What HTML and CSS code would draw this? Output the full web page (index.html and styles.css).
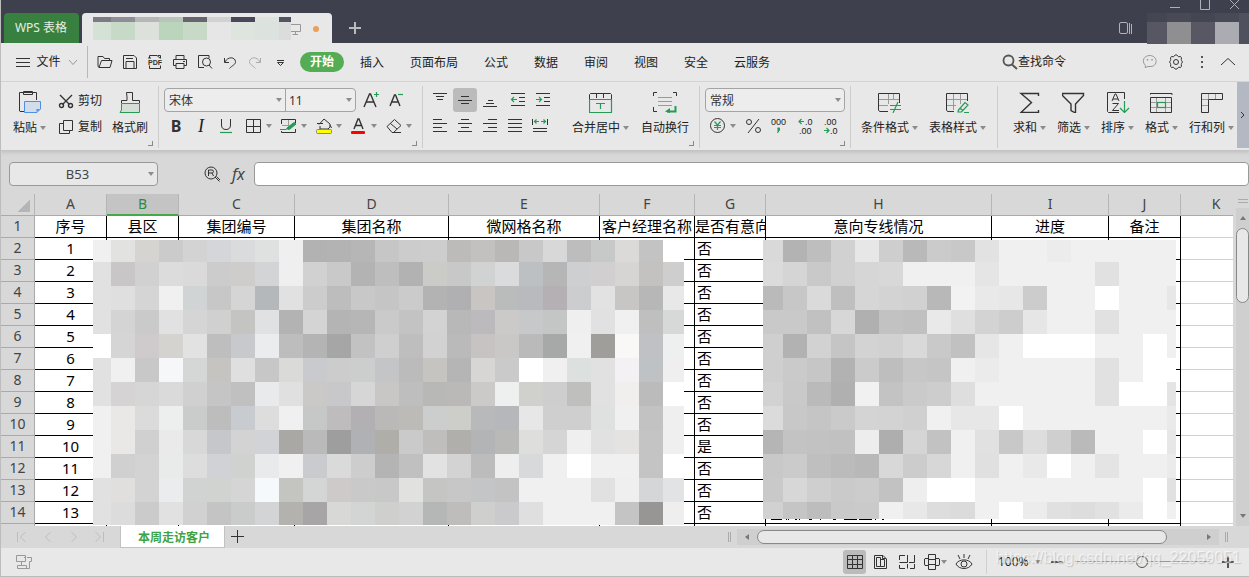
FILE: index.html
```html
<!DOCTYPE html>
<html lang="zh-CN">
<head>
<meta charset="utf-8">
<title>WPS 表格</title>
<link rel="stylesheet" href="styles.css">
</head>
<body>
<div class="app">
  <header class="titlebar">
    <button class="home-tab">WPS 表格</button>
    <div class="doc-tab">
      <svg class="tab-blocks" width="198" height="23" data-blocks="tab"></svg>
      <svg class="monitor" width="14" height="14" viewBox="0 0 14 14"><path d="M0 2.500H9.500V9.500H0M4.500 9.500V12.500M1.500 12.500H7" class="s-grey"/></svg>
      <span class="unsaved"></span>
    </div>
    <button class="new-tab" aria-label="新建"><svg width="14" height="14" viewBox="0 0 14 14"><path d="M7 1V13M1 7H13" stroke="#b9bbc1" stroke-width="2"/></svg></button>
    <div class="window-side">
      <div class="window-buttons">
        <button aria-label="最小化"><svg width="12" height="12" viewBox="0 0 12 12"><path d="M1 7.500H11" class="s-light"/></svg></button>
        <button aria-label="最大化"><svg width="12" height="12" viewBox="0 0 12 12"><path d="M1.500 0V9.500H10.500V0" class="s-light"/></svg></button>
        <button aria-label="关闭"><svg width="12" height="12" viewBox="0 0 12 12"><path d="M1 0L10 9M10 0L1 9" class="s-light"/></svg></button>
      </div>
      <div class="account-row">
        <svg width="14" height="13" viewBox="0 0 14 13"><rect x=".5" y=".5" width="8" height="11" rx="1.500" class="s-light"/><path d="M10.500 1V12M12.500 2V12" class="s-light"/></svg>
        <svg width="102" height="31" data-blocks="account"></svg>
      </div>
    </div>
  </header>

  <nav class="menubar">
    <button class="file-menu"><svg width="15" height="11" viewBox="0 0 15 11"><path d="M0 1.500H14M0 5.500H14M0 9.500H14" class="s"/></svg><span>文件</span><svg width="10" height="7" viewBox="0 0 10 7"><path d="M1 1L5 5.500L9 1" class="s-grey"/></svg></button>
    <div class="quick">
      <button aria-label="打开"><svg viewBox="0 0 16 16"><path d="M2.500 13.500L1 12.500V2.500H6L7.500 4.500H12.500V6.500M2 13.500L4.500 6.500H15L13 13.500Z" class="s"/></svg></button>
      <button aria-label="保存"><svg viewBox="0 0 16 16"><path d="M1.500 14.500V1.500H12L14.500 4V14.500ZM4 14V7.500H12V14M4 4.500H11" class="s"/></svg></button>
      <button aria-label="输出为PDF"><svg viewBox="0 0 16 16"><path d="M2.500 4V1.500H10L13.500 4.500M11 1.500H13.500V4M2.500 11.500V14.500H13.500V11.500M1 4H4" class="s"/><text x="1" y="11" class="pdf">PDF</text></svg></button>
      <button aria-label="打印"><svg viewBox="0 0 16 16"><path d="M4 5V1.500H12V5M4 11.500H1.500V5.500H14.500V11.500H12M4 9.500H12V14.500H4ZM11 7.500H13" class="s"/></svg></button>
      <button aria-label="打印预览"><svg viewBox="0 0 16 16"><path d="M7 13.500H1.500V1.500H12V4M12 11L15 14.500" class="s"/><circle cx="9.500" cy="8" r="4" class="s"/></svg></button>
      <button aria-label="撤销"><svg viewBox="0 0 16 16"><path d="M2.500 4V8.500H7M3 8C6 2 13 3 13.500 7.500C13.500 11 10.500 11 7.500 14.500" class="s"/></svg></button>
      <button aria-label="恢复"><svg viewBox="0 0 16 16"><path d="M13.500 4V8.500H9M13 8C10 2 3 3 2.500 7.500C2.500 11 5.500 11 8.500 14.500" class="s-faint"/></svg></button>
      <button aria-label="更多"><svg viewBox="0 0 16 16"><path d="M5 6.500H12M5.500 8.500L8.500 11.500L11.500 8.500Z" class="s"/></svg></button>
    </div>
    <div class="menus">
      <button class="on">开始</button><button>插入</button><button>页面布局</button><button>公式</button><button>数据</button><button>审阅</button><button>视图</button><button>安全</button><button>云服务</button>
    </div>
    <button class="find"><svg width="16" height="16" viewBox="0 0 16 16"><circle cx="6.500" cy="6.500" r="5" stroke="#555" stroke-width="1.800" fill="none"/><path d="M10 10.500L15 15" stroke="#555" stroke-width="2"/></svg><span>查找命令</span></button>
    <div class="menu-tools">
      <button aria-label="反馈"><svg width="16" height="16" viewBox="0 0 16 16"><path d="M3 13.500L3.500 11.500C-1 7 2 1.500 8 1.500C16 2 16 12 9 12.500H6Z" class="s-grey"/><path d="M5.500 5V6.500M10 5V6.500" stroke="#999" stroke-width="1.500"/></svg></button>
      <button aria-label="设置"><svg width="16" height="16" viewBox="0 0 16 16"><path d="M6.500 1.500Q8 0 9.500 1.500L10.500 2.800L12.500 2.500Q14 3.500 13.300 5.500L13.500 6.500Q15.500 8 13.500 9.500L13.300 10.500Q14 12.500 12.500 13.500L10.500 13.200L9.500 14.500Q8 16 6.500 14.500L5.500 13.200L3.500 13.500Q2 12.500 2.700 10.500L2.500 9.500Q.5 8 2.500 6.500L2.700 5.500Q2 3.500 3.500 2.500L5.500 2.800Z" class="s"/><circle cx="8" cy="8" r="2.500" class="s"/></svg></button>
      <button aria-label="更多选项"><svg width="4" height="16" viewBox="0 0 4 16"><path d="M1 2H3V4H1ZM1 7H3V9H1ZM1 12H3V14H1Z" fill="#555"/></svg></button>
      <button aria-label="收起功能区"><svg width="16" height="10" viewBox="0 0 16 10"><path d="M1 8L8 1.500L15 8" class="s"/></svg></button>
    </div>
  </nav>

  <section class="ribbon">
    <div class="group clip">
      <button class="big"><svg viewBox="0 0 24 24"><path d="M6 22.500H2L1.500 22V3.500H18.500V11M5.500 2.500H14.500V5.500H5.500Z" class="s"/><path d="M6.500 12.500H22.500V20L19 23.500H6.500Z" fill="#d3dcea" stroke="#4f8fe0"/><path d="M18.500 23V20H22Z" fill="#4f8fe0"/></svg><span>粘贴<i class="caret"></i></span></button>
      <div class="pair">
        <button><svg width="16" height="16" viewBox="0 0 16 16"><path d="M2 2L11.500 11.500M14 2L4.500 11.500" class="s14"/><circle cx="3.500" cy="12.500" r="2" class="s14"/><circle cx="12.500" cy="12.500" r="2" class="s14"/></svg>剪切</button>
        <button><svg width="16" height="16" viewBox="0 0 16 16"><path d="M5.500 1.500H14.500V11.500H5.500ZM5.500 4.500H1.500V14.500H11.500V11.500" class="s"/></svg>复制</button>
      </div>
      <button class="big"><svg viewBox="0 0 24 24"><path d="M3.500 14V11.500H9V8L8.500 3.500H14.500V8V11.500H21.500V14" class="s"/><path d="M3.500 14.500H21.500V23.500H2L3.500 21Z" fill="#d5dfd8" stroke="#259b56"/></svg><span>格式刷</span></button>
      <i class="launch"></i>
    </div>
    <div class="group font">
      <div class="line">
        <div class="combo">
          <label class="pick fontname"><select aria-label="字体"><option>宋体</option></select></label>
          <label class="pick fontsize"><select aria-label="字号"><option>11</option></select></label>
        </div>
        <button class="grow" aria-label="增大字号"><svg width="20" height="20" viewBox="0 0 20 20"><path d="M2 17L7.500 4H8.500L14 17M4 12H12" class="s14"/><path d="M12 4.500H17M14.500 2V7" class="g"/></svg></button>
        <button class="grow" aria-label="减小字号"><svg width="20" height="20" viewBox="0 0 20 20"><path d="M2 16L6.500 5H7.500L12 16M4 12H10" class="s14"/><path d="M10 4.500H15" class="g"/></svg></button>
      </div>
      <div class="line">
        <button class="t24 bold">B</button><button class="t24 ital">I</button><button class="t24" aria-label="下划线"><svg viewBox="0 0 16 16"><path d="M3.500 1V7Q3.500 11.500 8 11.500Q12.500 11.500 12.500 7V1" class="s"/><path d="M2 14.500H14" class="g"/></svg></button>
        <button class="split first"><svg viewBox="0 0 18 18"><path d="M1.500 2.500H15.500V15.500H1.500ZM8.500 2.500V15.500M1.500 9.500H15.500" class="s"/></svg><i class="caret"></i></button>
        <button class="split"><svg viewBox="0 0 18 18"><path d="M1.500 7V2.500H15.500V6M15.500 12V15.500H1.500V14" class="s"/><path d="M8.500 3V9M2 8.500H9" class="s-grey"/><path d="M0 12.500H6L8 10L14 5.500L16 7L10 12L8 12.500" fill="#259b56" stroke="#259b56"/></svg><i class="caret"></i></button>
        <button class="split"><svg viewBox="0 0 18 18"><path d="M4 7.500L9 2L15 7V10L13 12H5V9M2 6.500H8M15 8L16.500 11" class="s"/><rect x="1.500" y="12.500" width="15" height="4" rx="1" fill="#ff0" stroke="#888"/></svg><i class="caret"></i></button>
        <button class="split"><svg viewBox="0 0 18 18"><path d="M4 12L8 2H9L13 12M5.500 8.500H11.500" class="s14"/><rect x="1" y="14" width="14" height="3" rx="1" fill="#f00"/></svg><i class="caret"></i></button>
        <button class="split"><svg viewBox="0 0 18 18"><path d="M2 9.500L9.500 2.500L16 8.500L8.500 15.500H7ZM5.500 6.500L12 12M8 15.500H16" class="s"/></svg><i class="caret"></i></button>
      </div>
      <i class="launch"></i>
    </div>
    <div class="group align">
      <div class="aligns">
        <div class="line">
          <button class="t24" aria-label="顶端对齐"><svg viewBox="0 0 16 16"><path d="M1 1.500H15M4 4.500H12M5 7.500H11" class="s"/></svg></button>
          <button class="t24 on" aria-label="垂直居中"><svg viewBox="0 0 16 16"><path d="M4 4.500H12M1 8.500H15M4 11.500H12" class="s"/></svg></button>
          <button class="t24" aria-label="底端对齐"><svg viewBox="0 0 16 16"><path d="M6 8.500H11M4 11.500H12M1 14.500H15" class="s"/></svg></button>
          <button class="t24 gap3" aria-label="减少缩进"><svg viewBox="0 0 16 16"><path d="M1 1.500H15M9 5.500H15M9 9.500H15M1 13.500H15" class="s"/><path d="M7 7.500H1.500M4 5L1.500 7.500L4 10" class="g"/></svg></button>
          <button class="t24" aria-label="增加缩进"><svg viewBox="0 0 16 16"><path d="M1 1.500H15M9 5.500H15M9 9.500H15M1 13.500H15" class="s"/><path d="M1 7.500H6.500M4 5L6.500 7.500L4 10" class="g"/></svg></button>
        </div>
        <div class="line">
          <button class="t24" aria-label="左对齐"><svg viewBox="0 0 16 16"><path d="M1 1.500H10M1 5.500H15M1 9.500H10M1 13.500H15" class="s"/></svg></button>
          <button class="t24" aria-label="水平居中"><svg viewBox="0 0 16 16"><path d="M4 1.500H12M1 5.500H15M4 9.500H12M1 13.500H15" class="s"/></svg></button>
          <button class="t24" aria-label="右对齐"><svg viewBox="0 0 16 16"><path d="M6 1.500H15M1 5.500H15M6 9.500H15M1 13.500H15" class="s"/></svg></button>
          <button class="t24" aria-label="两端对齐"><svg viewBox="0 0 16 16"><path d="M1 1.500H15M1 5.500H15M1 9.500H15M1 13.500H15" class="s"/></svg></button>
          <button class="t24" aria-label="分散对齐"><svg viewBox="0 0 16 16"><path d="M.5 1V7M15.500 1V7M1 10.500H15M1 13.500H15" class="s"/><path d="M2.500 3.500H7M4.500 1.500L2.500 3.500L4.500 5.500M9 3.500H13.500M11.500 1.500L13.500 3.500L11.500 5.500" class="g"/></svg></button>
        </div>
      </div>
      <button class="big"><svg viewBox="0 0 24 24"><path d="M.5 10V5.500L1.500 4.500H21.500L22.500 5.500V10M7.500 5V9M14.500 5V9" class="s"/><path d="M.5 10V23.500H22.500V10.500H.5M7 14.500H16M11.500 14.500V20" class="g"/></svg><span>合并居中<i class="caret"></i></span></button>
      <button class="big"><svg viewBox="0 0 24 24"><path d="M.5 7V3.500H4M20 3.500H23.500V7M.5 18V22.500H4" class="s"/><path d="M5 8.500H19M5 12.500H19M5 16.500H19" class="s-grey"/><path d="M22.500 17V22.500H14" stroke="#259b56" stroke-width="2" fill="none"/><path d="M17 19V24L12 22.500Z" fill="#259b56"/></svg><span>自动换行</span></button>
      <i class="launch"></i>
    </div>
    <div class="group number">
      <div class="line"><div class="combo wide"><label class="pick"><select aria-label="数字格式"><option>常规</option></select></label></div></div>
      <div class="line">
        <button class="split"><svg viewBox="0 0 18 18"><circle cx="7.500" cy="8.500" r="7" class="s"/><path d="M4.500 4.500L7.500 8L10.500 4.500M7.500 8V13M4 8.500H11M4 10.500H11" class="g"/></svg><i class="caret"></i></button>
        <button class="t24" aria-label="百分比"><svg viewBox="0 0 16 16"><circle cx="4" cy="4" r="2.500" class="s"/><circle cx="13" cy="12" r="2.500" class="s"/><path d="M14 1L3 15" class="s"/></svg></button>
        <button class="t24" aria-label="千位分隔"><svg viewBox="0 0 18 18"><text x="2" y="8" class="mini">000</text><path d="M8.500 11H10.500V13L8.500 16" fill="#259b56" stroke="#259b56"/></svg></button>
        <button class="t24 gap3" aria-label="增加小数"><svg viewBox="0 0 18 18"><path d="M2 4.500H7M4.500 2L2 4.500L4.500 7" class="g"/><text x="8" y="8" class="mini">.0</text><text x="2" y="17" class="mini">.00</text></svg></button>
        <button class="t24" aria-label="减少小数"><svg viewBox="0 0 18 18"><text x="2" y="8" class="mini">.00</text><path d="M2 13.500H7M4.500 11L7 13.500L4.500 16" class="g"/><text x="8" y="17" class="mini">.0</text></svg></button>
      </div>
      <i class="launch"></i>
    </div>
    <div class="group styles">
      <button class="big"><svg viewBox="0 0 24 24"><path d="M10 22.500H1.500L.5 21V4.500H21.500V14" class="s"/><path d="M10.500 5V15M15.500 5V10M1 10.500H21M1 16.500H10" class="s-grey"/><path d="M12 16.500H23M12 20.500H23M20 13L15 24" class="g"/></svg><span>条件格式<i class="caret"></i></span></button>
      <button class="big"><svg viewBox="0 0 24 24"><path d="M8 22.500H1.500L.5 21V4.500H21.500V12" class="s"/><path d="M7.500 5V21M14.500 5V15M1 10.500H21M1 16.500H10" class="s-grey"/><path d="M12.500 21L19 13.500L22 16L15.500 23H12ZM14 19L17 21.500M18 23.500H23" class="g"/></svg><span>表格样式<i class="caret"></i></span></button>
    </div>
    <div class="group edit">
      <button class="big"><svg viewBox="0 0 24 24"><path d="M20.500 7V4.500H3L13.500 13.500L3 23.500H20.500V21" class="s14"/></svg><span>求和<i class="caret"></i></span></button>
      <button class="big"><svg viewBox="0 0 24 24"><path d="M.5 4.500H21.500V6.500L13.500 15V24L9 21.500V15L.5 6.500Z" class="s14"/></svg><span>筛选<i class="caret"></i></span></button>
      <button class="big"><svg viewBox="0 0 24 24"><path d="M13 23.500H2.500L1.500 22.500V3.500H18.500V10M6 12L9 5H10L13 12M7 10H12M6.500 14.500H12.500L6.500 21.500H13" class="s"/><path d="M18.500 12V23M14 19L18.500 23.500L23 19" class="g"/></svg><span>排序<i class="caret"></i></span></button>
      <button class="big"><svg viewBox="0 0 24 24"><path d="M0 6V4.500H22V6M.5 8.500H21.500V23.500H.5Z" class="s"/><path d="M6.500 9V23M15.500 9V23M1 13.500H21M1 18.500H21" class="s-grey"/><rect x="7.500" y="13.500" width="8" height="5" fill="#e8e8e8" class="g"/></svg><span>格式<i class="caret"></i></span></button>
      <button class="big"><svg viewBox="0 0 24 24"><path d="M1.500 4.500H22.500V10.500H8.500V23.500H1.500Z" class="s"/><path d="M8.500 5V10M15.500 5V10M2 10.500H8M2 16.500H8" class="s-grey"/></svg><span>行和列<i class="caret"></i></span></button>
    </div>
    <button class="more" aria-label="更多功能"><svg width="6" height="8" viewBox="0 0 6 8"><path d="M1 1L4 4L1 7" class="s"/></svg></button>
  </section>

  <div class="formula">
    <label class="pick namebox"><input aria-label="名称框" value="B53"></label>
    <svg class="lookup" width="17" height="17" viewBox="0 0 17 17"><circle cx="7" cy="7" r="6" class="s"/><path d="M4.500 10V4H8C10 4 10 7 8 7H5M8 7L9.500 10M11 11L15.500 15.500M12.500 10.500L16 14" class="s"/></svg>
    <span class="fx">fx</span>
    <input class="entry" aria-label="编辑栏">
  </div>

  <main class="sheet">
    <div class="grid-wrap">
      <table class="grid">
        <colgroup><col class="w-n"><col class="w-a"><col class="w-a"><col class="w-c"><col class="w-d"><col class="w-e"><col class="w-f"><col class="w-g"><col class="w-h"><col class="w-i"><col class="w-a"><col></colgroup>
        <thead><tr><th class="corner"></th><th>A</th><th class="sel">B</th><th>C</th><th>D</th><th>E</th><th>F</th><th>G</th><th>H</th><th>I</th><th>J</th><th class="last">K</th></tr></thead>
        <tbody id="rows">
          <tr><th>1</th><td>序号</td><td>县区</td><td>集团编号</td><td>集团名称</td><td>微网格名称</td><td>客户经理名称</td><td>是否有意向</td><td>意向专线情况</td><td>进度</td><td>备注</td><td class="free"></td></tr>
        </tbody>
      </table>
      <svg class="cover left" width="591" height="285" data-blocks="left"></svg>
      <svg class="cover right" width="413" height="281" data-blocks="right"></svg>
    </div>
    <div class="vbar">
      <span class="grip"></span>
      <div class="vtrack"><i class="up"></i><span class="vthumb"></span><i class="down"></i></div>
    </div>
  </main>

  <div class="tabs">
    <div class="nav">
      <button aria-label="第一个"><svg viewBox="0 0 12 12"><path d="M1.500 1V11M9.500 1L4.500 6L9.500 11" class="s-nav"/></svg></button>
      <button aria-label="上一个"><svg viewBox="0 0 12 12"><path d="M8.500 1L3.500 6L8.500 11" class="s-nav"/></svg></button>
      <button aria-label="下一个"><svg viewBox="0 0 12 12"><path d="M3.500 1L8.500 6L3.500 11" class="s-nav"/></svg></button>
      <button aria-label="最后一个"><svg viewBox="0 0 12 12"><path d="M1.500 1L6.500 6L1.500 11M9.500 1V11" class="s-nav"/></svg></button>
    </div>
    <button class="sheet-tab">本周走访客户</button>
    <button class="add" aria-label="新建工作表"><svg width="14" height="14" viewBox="0 0 14 14"><path d="M6.500 0V13M0 6.500H13" class="s"/></svg></button>
    <div class="hbar"><i class="pipes"></i><div class="htrack"><i class="lt"></i><span class="hthumb"></span><i class="rt"></i></div><i class="pipes"></i></div>
  </div>

  <footer class="status">
    <svg class="io" width="18" height="18" viewBox="0 0 18 18"><path d="M1.500 2.500H10.500V8.500H1.500ZM12 4.500H16.500V8.500H14.500V15.500H10M6.500 9V12M2.500 12.500H11.500V15.500H2.500ZM9 4.500H11" class="s-grey"/></svg>
    <div class="views">
      <button class="on" aria-label="普通视图"><svg viewBox="0 0 18 18"><path d="M1.500 2.500H16.500V15.500H1.500ZM6.500 2.500V15.500M11.500 2.500V15.500M1.500 6.500H16.500M1.500 11.500H16.500" class="s"/></svg></button>
      <button aria-label="页面布局视图"><svg viewBox="0 0 18 18"><path d="M2.500 2.500H11L14.500 6V15.500H2.500ZM4.500 4.500H8.500V13.500H4.500ZM8.500 6.500H12.500V13.500H8.500M10.500 2.500V5.500H14" class="s"/></svg></button>
      <button aria-label="分页预览"><svg viewBox="0 0 18 18"><path d="M1.500 7V2.500H7M9.500 2V9.500H1.500M11 9.500H16.500V2M1.500 12V15.500H7M9.500 11V15.500M12 15.500H16.500V11" class="s"/></svg></button>
      <button aria-label="阅读模式"><svg viewBox="0 0 18 18"><path d="M5.500 1.500H12.500V16.500H5.500ZM5 5.500H2L1.500 6V11L2 12.500H5M13 5.500H16L16.500 6V11L16 12.500H13M5.500 6.500H12.500M5.500 11.500H12.500" class="s"/></svg><i class="caret"></i></button>
      <button aria-label="护眼模式"><svg viewBox="0 0 18 18"><path d="M1 11C4 5.500 14 5.500 17 11C14 17 4 17 1 11ZM9 1V5M3 2L5 6M15 2L13 6" class="s"/><circle cx="9" cy="11" r="3" class="s"/></svg></button>
    </div>
    <div class="zoom">
      <button class="pct">100%<i class="caret"></i></button>
      <button aria-label="缩小"><svg width="12" height="12" viewBox="0 0 12 12"><path d="M0 6H12" stroke="#555" stroke-width="2"/></svg></button>
      <input type="range" aria-label="缩放" min="0" max="100" value="50">
      <button aria-label="放大"><svg width="12" height="12" viewBox="0 0 12 12"><path d="M0 6H12M6 0V12" stroke="#555" stroke-width="2"/></svg></button>
    </div>
    <span class="mark">https://blog.csdn.net/qq_22059051</span>
  </footer>
</div>
<script src="script.js"></script>
</body>
</html>
```
FILE: styles.css
```css
* { box-sizing: border-box; }
body {
  margin: 0;
  background: #e8e8e8;
  color: #222;
  font: 12px/16px "Noto Sans", "Noto Sans CJK SC", sans-serif;
}
button, input, select {
  margin: 0; padding: 0; border: 0;
  background: none; color: inherit; font: inherit; border-radius: 0;
}
button { display: flex; align-items: center; justify-content: center; white-space: nowrap; }
svg { display: block; flex: none; }
i { font-style: normal; }
.app { border-left: 1px solid #bdbdbd; border-bottom: 1px solid #bbb; overflow: hidden; }

.s { stroke: #333; fill: none; }
.s14 { stroke: #333; stroke-width: 1.4; fill: none; }
.s-grey { stroke: #999; fill: none; }
.s-faint { stroke: #aaa; fill: none; }
.s-nav { stroke: #bdbdbd; fill: none; }
.s-light { stroke: #aeb1b8; fill: none; }
.g { stroke: #259b56; fill: none; stroke-width: 1.2; }
.mini { font: 9px "Liberation Sans", sans-serif; fill: #222; }
.pdf { font: bold 7px "Liberation Sans", sans-serif; fill: #333; }

.caret { width: 0; border: 3px solid transparent; border-top: 4px solid #8c8c8c; border-bottom: 0; flex: none; }

/* title bar */
.titlebar { display: flex; height: 43px; background: #3e414d; }
.home-tab, .doc-tab { margin-top: 13px; height: 30px; border-radius: 4px 4px 0 0; }
.home-tab { width: 75px; margin-left: 3px; padding-right: 1px; background: #37803f; color: #e6efe6; }
.doc-tab { display: flex; width: 250px; margin-left: 3px; padding: 4px 0 0 11px; background: #e8e8e8; }
.monitor { margin-top: 5px; }
.unsaved { width: 6px; height: 6px; margin: 9px 0 0 8px; border-radius: 3px; background: #e8a05a; }
.new-tab { width: 46px; margin-top: 13px; }
.window-side { margin-left: auto; display: flex; flex-direction: column; align-items: flex-end; }
.window-buttons { display: flex; gap: 18px; height: 13px; padding-right: 8px; align-items: flex-start; }
.window-buttons button { height: 12px; }
.account-row { display: flex; gap: 14px; align-items: center; height: 30px; }

/* menu bar */
.menubar { display: flex; align-items: center; height: 39px; border-bottom: 1px solid #d4d4d4; }
.file-menu { width: 87px; height: 32px; padding-left: 6px; gap: 5px; border-right: 1px solid #b8b8b8; }
.file-menu svg:last-child { margin-left: 2px; }
.quick { display: flex; gap: 9px; margin-left: 9px; }
.quick svg { width: 16px; height: 16px; }
.menus { display: flex; gap: 26px; margin-left: 12px; }
.menus button { padding-top: 1px; }
.menus .on { width: 44px; height: 20px; margin-right: -10px; padding: 0; border-radius: 10px; background: #54ad55; color: #fff; font-weight: bold; }
.find { margin-left: auto; }
.menu-tools { display: flex; align-items: center; gap: 10px; margin: 0 13px 0 76px; }
.menu-tools button:nth-child(3) { margin: 0 6px; }

/* ribbon */
.ribbon { display: flex; height: 69px; border-bottom: 1px solid #c4c4c4; box-shadow: 0 2px 3px #c4c4c4; position: relative; }
.group { position: relative; flex: none; padding-top: 6px; }
.group::after { content: ""; position: absolute; right: 0; top: 4px; bottom: 2px; border-right: 1px solid #ccc; }
.group.edit::after { content: none; }
.launch { position: absolute; right: 6px; bottom: 4px; width: 5px; height: 5px; border: solid #888; border-width: 0 1px 1px 0; }
.clip, .styles, .edit, .align { display: flex; align-items: flex-start; }
.clip { width: 158px; padding-left: 12px; gap: 12px; }
.clip .pair { display: flex; flex-direction: column; }
.clip .pair button { height: 26px; gap: 4px; }
.clip .big:last-of-type { margin-left: -2px; }
.big { flex-direction: column; gap: 7px; margin-top: 1px; }
.big svg { width: 24px; height: 24px; }
.big span { display: flex; align-items: center; gap: 3px; height: 16px; }
.line { display: flex; height: 24px; align-items: center; }
.line + .line { margin-top: 2px; }
.t24 { width: 24px; height: 24px; margin-right: 1px; }
.t24 svg { width: 16px; height: 16px; }
.t24 svg[viewBox="0 0 18 18"] { width: 18px; height: 18px; }
.t24.on { background: #bbb; border-radius: 3px; }
.gap3 { margin-left: 3px; }
.split { width: 35px; height: 24px; gap: 3px; justify-content: flex-start; }
.split svg { width: 18px; height: 18px; }
.font { width: 264px; padding-left: 5px; }
.bold { font-weight: bold; font-size: 16px; color: #333; }
.ital { font: italic 18px "Liberation Serif", serif; }
.first { margin-left: 6px; }
.grow { width: 26px; }
.grow:nth-child(2) { margin-left: 3px; }
.combo { display: flex; width: 192px; height: 24px; border: 1px solid #a4a4a4; border-radius: 4px; background: #ededed; }
.combo.wide { width: 140px; }
.pick { position: relative; flex: 1; display: flex; }
.pick::after { content: ""; position: absolute; right: 3px; top: 50%; margin-top: -2px; border: 3px solid transparent; border-top: 4px solid #8c8c8c; border-bottom: 0; }
.pick select { appearance: none; width: 100%; padding: 1px 0 0 4px; color: #333; }
.fontsize { flex: none; width: 70px; border-left: 1px solid #a4a4a4; }
.fontsize select { padding-left: 3px; }
.align { width: 277px; padding-left: 5px; }
.align .big { margin-left: 12px; }
.aligns { width: 132px; }
.number { width: 151px; padding-left: 5px; }
.number .split { padding-left: 5px; gap: 2px; width: 36px; }
.styles { width: 147px; padding-left: 10px; gap: 11px; }
.edit { padding-left: 15px; gap: 11px; }
.more { width: 12px; height: 66px; margin-left: auto; background: #b4b8c2; flex: none; }

/* formula bar */
.formula { display: flex; align-items: center; height: 43px; padding: 3px 0 0 8px; background: #d8d8d8; }
.namebox { flex: none; width: 149px; height: 24px; border: 1px solid #999; border-radius: 4px; background: #e8e8e8; }
.namebox input { width: 100%; padding-right: 12px; text-align: center; font-size: 13px; color: #444; }
.lookup { margin-left: 46px; }
.fx { width: 33px; padding-left: 11px; font: italic 16px "Noto Sans", sans-serif; color: #444; }
.entry { flex: 1; min-width: 0; height: 24px; padding: 0 6px; border: 1px solid #999; border-radius: 4px; background: #fff; }

/* sheet */
.sheet { display: flex; background: #d8d8d8; }
.grid-wrap { position: relative; flex: 1; min-width: 0; }
.grid { width: 100%; table-layout: fixed; border-collapse: separate; border-spacing: 0; background: #fff; font-size: 15px; line-height: 20px; color: #000; }
.grid th, .grid td { height: 22px; padding: 0 0 1px; overflow: hidden; white-space: nowrap; text-align: center; font-weight: normal; border: solid #000; border-width: 0 1px 1px 0; }
.grid th { background: #d8d8d8; color: #444; border-color: #aaa; font-size: 14px; }
.grid thead th { border-right-color: #b5b5b5; }
.grid thead .sel { padding: 0; background: #c4c4c4; color: #2e8b3d; border-bottom: 2px solid #45a849; }
.grid thead .last, .grid .free { border-right: 0; }
.grid thead .last { padding-left: 18px; }
.grid .free { border-bottom-color: #d0d0d0; }
.grid .answer { padding-left: 2px; text-align: left; }
.grid .tail th, .grid .tail td { height: 2px; padding: 0; border-bottom: 0; }
.corner { background: linear-gradient(135deg, #d8d8d8 50%, #b5b5b5 50%) 17px 6px / 12px 12px no-repeat #d8d8d8 !important; }
.w-n { width: 34px; } .w-a { width: 72px; } .w-c { width: 116px; } .w-d { width: 154px; } .w-e { width: 151px; }
.w-f { width: 95px; } .w-g { width: 71px; } .w-h { width: 226px; } .w-i { width: 117px; }
.cover { position: absolute; top: 46px; }
.cover.left { left: 92px; }
.cover.right { left: 762px; }
.vbar { display: flex; flex-direction: column; width: 16px; padding-left: 3px; }
.grip { height: 4px; margin: 5px 1px 5px 2px; border: solid #aaa; border-width: 1px 0; }
.vtrack { flex: 1; display: flex; flex-direction: column; align-items: center; padding: 8px 0; background: #cfcfcf; }
.vthumb { width: 13px; height: 75px; margin-top: 8px; border: 1px solid #888; border-radius: 7px; background: #e8e8e8; }
.up, .down { border: 3px solid transparent; }
.up { border-bottom: 4px solid #777; border-top: 0; }
.down { margin-top: auto; border-top: 4px solid #777; border-bottom: 0; }

/* sheet tabs */
.tabs { display: flex; height: 22px; background: #d8d8d8; }
.nav { display: flex; width: 119px; gap: 14px; padding-left: 15px; }
.nav svg { width: 12px; height: 12px; }
.sheet-tab { padding: 2px 14px 0 17px; background: #fff; border: solid #c2c2c2; border-width: 0 1px 1px; color: #3fa343; font-weight: bold; }
.add { padding: 0 6px; }
.hbar { display: flex; align-items: center; width: 500px; margin: 0 21px 0 auto; gap: 6px; }
.pipes { width: 3px; height: 10px; border: solid #aaa; border-width: 0 1px; }
.htrack { display: flex; align-items: center; flex: 1; height: 16px; padding: 0 8px; background: #cfcfcf; }
.hthumb { width: 410px; height: 14px; margin-left: 8px; border: 1px solid #888; border-radius: 7px; background: #e8e8e8; }
.lt, .rt { border: 3px solid transparent; }
.lt { border-right: 4px solid #777; border-left: 0; }
.rt { margin-left: auto; border-left: 4px solid #777; border-right: 0; }

/* status bar */
.status { position: relative; display: flex; align-items: center; height: 28px; padding: 0 15px 0 14px; background: #e8e8e8; }
.views { display: flex; gap: 3px; margin-left: auto; padding-right: 11px; border-right: 1px solid #d0d0d0; }
.views button { width: 23px; height: 24px; }
.views button:nth-child(4) { width: 28px; }
.views svg { width: 18px; height: 18px; }
.views .on { background: #bbb; border-radius: 3px; }
.zoom { display: flex; align-items: center; width: 247px; padding-left: 11px; }
.pct { gap: 6px; margin-right: 10px; }
.zoom input { flex: 1; min-width: 0; appearance: none; height: 14px; margin: 0 12px; background: linear-gradient(#999, #999) 0 6px / 100% 1px no-repeat; }
.zoom input::-webkit-slider-thumb { appearance: none; width: 12px; height: 12px; border: 1px solid #555; border-radius: 6px; background: #e8e8e8; }
.mark { position: absolute; right: 8px; top: 0; font: 16px/20px "Liberation Sans", sans-serif; color: rgba(255, 255, 255, .6); text-shadow: 1px 1px 1px rgba(120, 120, 120, .3); pointer-events: none; }
```
FILE: script.js
```js
const NS = "http://www.w3.org/2000/svg";

/* Pixelated areas: column widths, row heights, one colour per block (two digits = grey). */
const BLOCKS = {
  tab: {
    cols: [18, 24, 24, 24, 24, 24, 24, 24, 12],
    rows: [5, 18],
    colors: [
      "7c7a84 8e8d98 b5b6b8 b9c5ba 66656f d0d2d1 48485a dde3df 535463",
      "d3e2d4 c7dac8 dce2db bad5bb c8dac7 e6 dee4de dce2dd dbdddc"
    ]
  },
  account: {
    cols: [20, 24, 24, 24, 10],
    rows: [9, 22],
    colors: ["444652 484a55 444652 484a55 50515e", "565763 8f8f92 575864 abacb1 50515e"]
  },
  left: {
    cols: [18, ...Array(23).fill(24), 21],
    rows: [22, ...Array(10).fill(24), 23],
    colors: [
      "f0 e2e3e1 d5d4d1 cb d3 d4d6d9 dadbdd dfe1e0 ef b2 b3 b6 c6 cc cd bcbbb9 c2c1bf b9b8b6 c8 d8 bd c6c9c7 dbdad8 c3 ff",
      "e1 c9c6c7 d1 dc da cc cfcdcb d3d4d5 ef d1 c9 b3 be b2 cbcbc8 c8 d0d3d1 dadbdd bdc0c2 b6 cecfd1 d2cfd0 d6d5d3 c4c2c0 ce",
      "e1 df d5 f0 d0d4d4 c7 d5 b4b8bb e1 cc bd c8 c5 cb b3 b0b0b3 c8c5c3 b9bcba b8babd b5b0b3 cccdcf e2 c7c6c4 b7 e8",
      "e1 d4 ca e1 d5 d0 c4c4c2 e0e1e3 b3 d4 b4 b6 ca c3 d3 b8 bcbabc cccac8 c6c8ca c3c6c4 ef e1 f0 bf d7d9d8",
      "ff d5 cfcacc d4d3d0 e2 be c8c9cc ebecee bd b4 a6 c2 cf be d2 ba c7c3c2 c9c8c6 ba a6a9a7 f0 9f9e9b f9f8f6 c0c1c4 edf0ee",
      "e1 f0 c8 f5f7f9 d4d7d5 c5c4c1 df c7 dadad8 c9cacd cc cbcecc c3c5c7 bb c5c4c1 b5 d7d6d4 ca ff f0 dce0de e1 f3f1f3 bfc2c4 ef",
      "e1 d5d3d4 d6 da d0 c5 c0 e9eaec e0 cbc9c7 c8c8cb d6 c9c7c5 be b8b8b6 bab9b7 cccac8 edf0ee d0d0cc ce bfbfbd e1 f0efed bb ff",
      "f0 e9e8e6 db ecefee c9ccca bd c8ccd0 dd f0 c5c8c6 bebcbd b2b0b2 bab9b7 bcbbb8 cbcecc cdcdca b7b9bb b5b7ba e7 cf cf dee1df f0 c2 ef",
      "f0 e9e8e6 d0 ea d8 c6c7ca d3 d2d3d6 a9a8a5 ba 9e b0b1b4 afaea9 ca bfbebc b0afac b3b4b6 b9b9b7 dededc d5 ef e1 e4e3e1 c4 ef",
      "f0 d0 d3 e8ebea dd d1d2d5 d0d2d0 e9eaec f0 cacbce da cd b4 c0 e2 d3 bc ee d7d9db f0 ff f0 f0 c4 ff",
      "e1 e0dfdd d3 ebecee d0d3d1 d1d3d1 d5 f5f9fc c4c4c1 d3d6d4 cdcac9 c9 c8 e1e1df c5c5c3 c7 c3c5c7 c3 f0 f0 f0 e1 ef d5d6d8 e2e3e5",
      "e1 dc cb e1 d1 c4 c9ccca d3d4d6 b4b2af a7a5a6 d8d8d6 d3d5d4 cfcfcd d2 b4b7b6 bfbdbb cfcfcd cac9cc df f0 f0 f0 c4 979694 ee"
    ]
  },
  right: {
    cols: [20, ...Array(16).fill(24), 9],
    rows: [22, ...Array(10).fill(24), 17],
    colors: [
      "d9 b3 be d1 e7 ce b9 cb c8 e2 f0 f0 ec f0 f0 f0 f0 f0",
      "db d5 c9 d1 d6 d8 f0 f0 f0 e5 f0 f0 f0 f0 e1 f0 f0 f0",
      "ba c7 da bf d6 d3 d1 b8 f2 e9 e7 cc f0 f0 ff f0 f0 e7",
      "c9 c9 c1 d7 b0 c2 c0 e9 df d3 cd e6 f0 f0 e1 f0 f0 f0",
      "cf b2 d2 c5 d3 d1 d9 c9 c1 e6 f0 ff ff ff f0 f0 ff f0",
      "cf ca c6 b2 cb be c7 c5 f0 eb f0 f0 f0 f0 e1 f0 ff ff",
      "d2 c9 ba b0 f1 c3 ca cd de f0 f0 f0 f0 f0 e1 ff ff e4",
      "db c8 c5 ca d4 d3 d0 f0 e7 e7 ff f0 f0 f0 f0 f0 f0 ea",
      "b5 c3 c2 c1 ed ae d5 c2 f0 e1 c8 dd cf ba f0 f0 ff e7",
      "c8 cb bf bb b8 d8 cc d7 f0 e0 f0 e9 ff f0 e4 f0 f0 eb",
      "c9 d7 cf ca cc c2 ee ff ff f0 f0 f0 f0 f0 f0 f0 ff e1",
      "d1 c5 bd c9 ca f0 e8 dd db f0 ff ec e0 dd e1 eb ff f0"
    ],
    strokes: [[8, 11], [23, 1], [25, 1], [32, 2], [36, 1], [46, 3], [57, 1], [70, 3], [81, 13], [96, 13], [112, 1], [119, 2]]
  }
};

function addRect(svg, x, y, w, h, fill) {
  const r = document.createElementNS(NS, "rect");
  r.setAttribute("x", x);
  r.setAttribute("y", y);
  r.setAttribute("width", w);
  r.setAttribute("height", h);
  r.setAttribute("fill", fill);
  svg.appendChild(r);
}

document.querySelectorAll("svg[data-blocks]").forEach(svg => {
  const b = BLOCKS[svg.dataset.blocks];
  let y = 0;
  b.colors.forEach((line, j) => {
    let x = 0;
    line.split(" ").forEach((c, i) => {
      addRect(svg, x, y, b.cols[i], b.rows[j], "#" + (c.length === 2 ? c.repeat(3) : c));
      x += b.cols[i];
    });
    y += b.rows[j];
  });
  (b.strokes || []).forEach(([x, w]) => addRect(svg, x, y, w, 1, "#000"));
});

const body = document.getElementById("rows");
for (let n = 1; n <= 14; n++) {
  const tr = body.insertRow();
  const head = document.createElement("th");
  tr.appendChild(head);
  for (let c = 0; c < 11; c++) tr.insertCell();
  tr.lastChild.className = "free";
  if (n === 14) {
    tr.className = "tail";
    continue;
  }
  head.textContent = n + 1;
  tr.cells[1].textContent = n;
  tr.cells[7].textContent = n === 10 ? "是" : "否";
  tr.cells[7].className = "answer";
}
```
